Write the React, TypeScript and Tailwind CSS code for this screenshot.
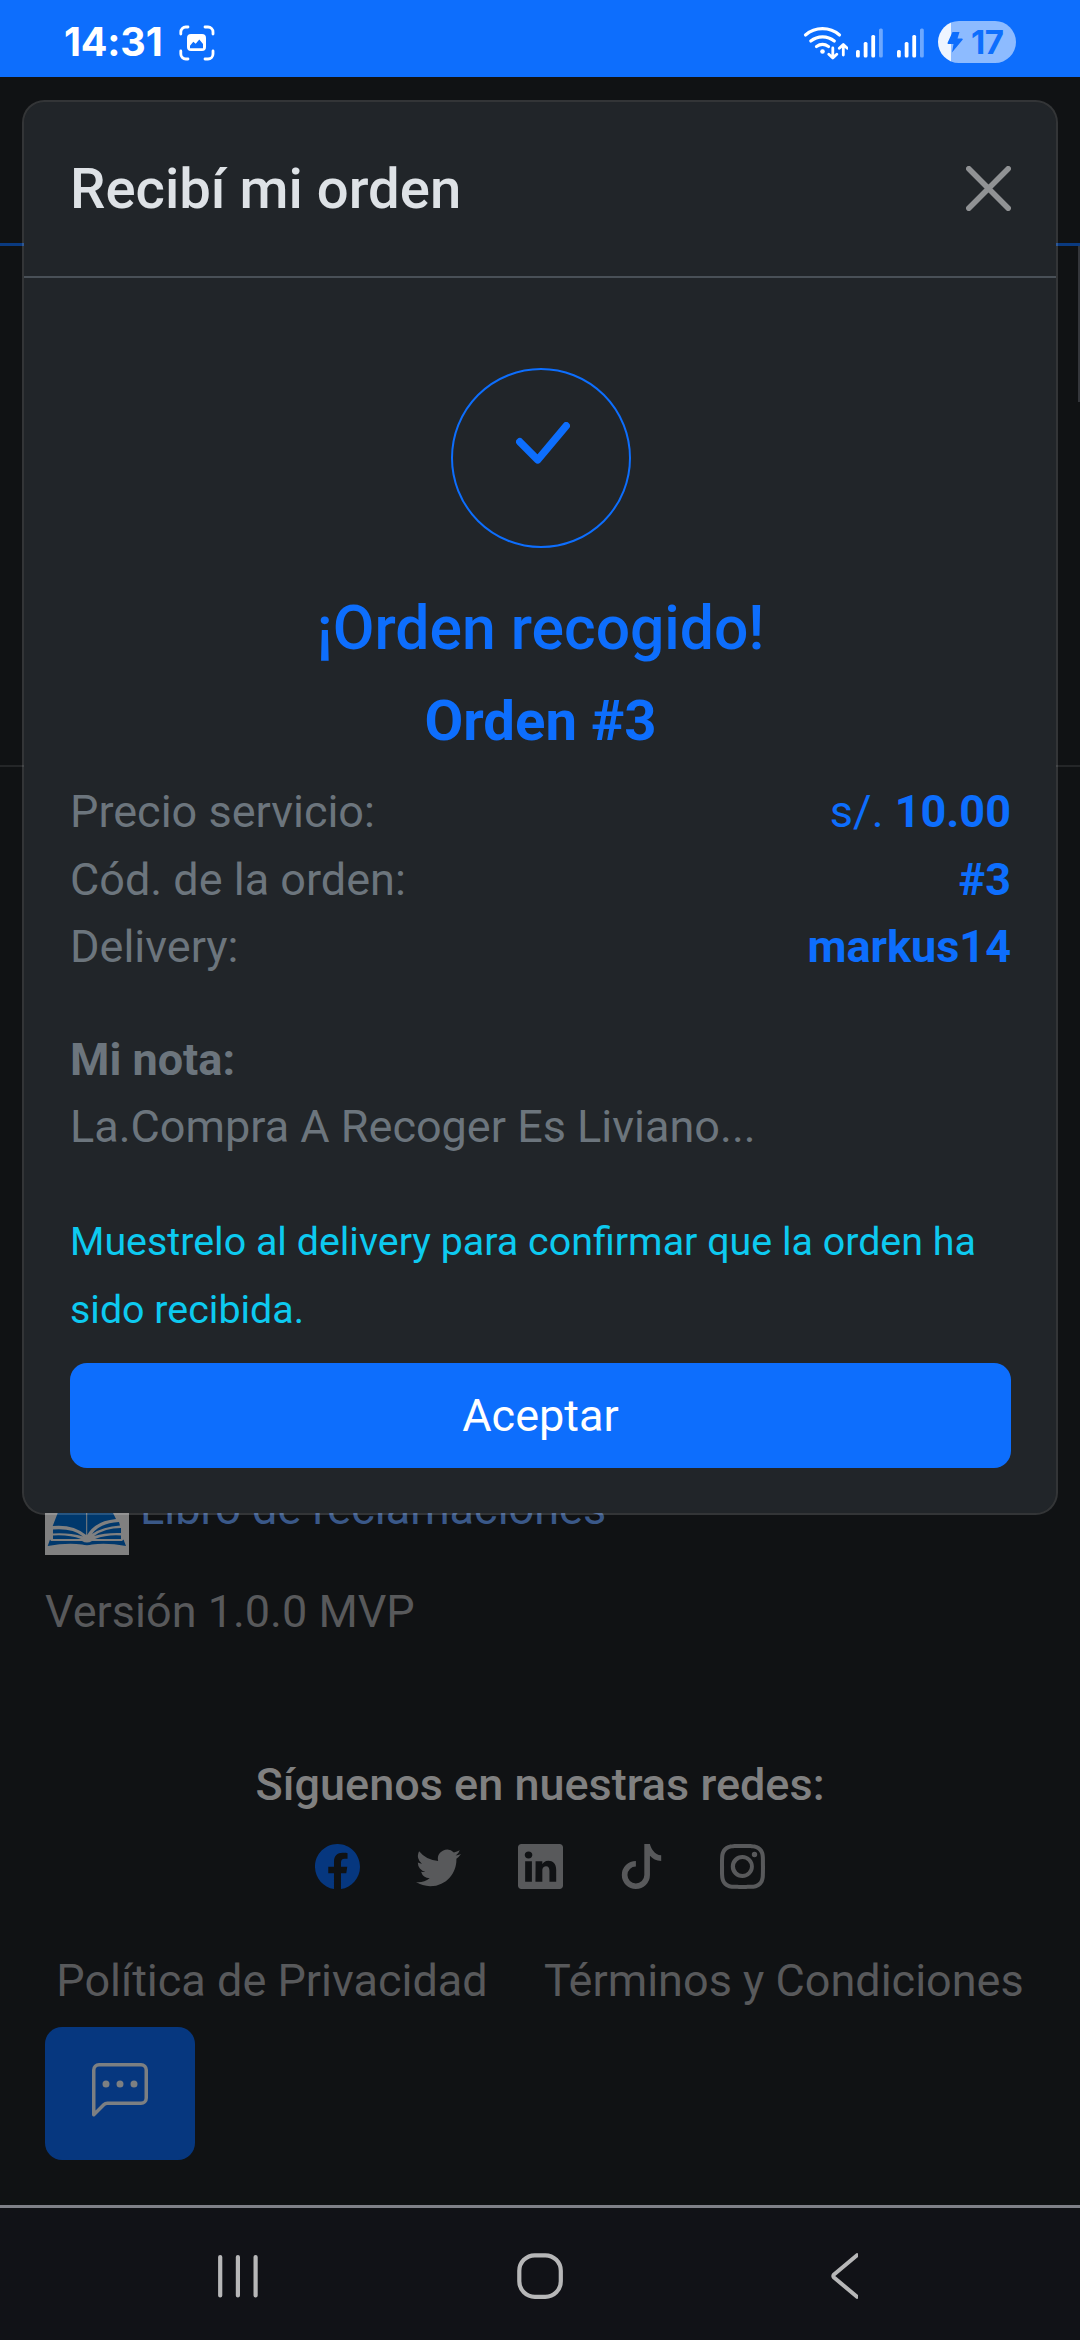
import type { ReactNode } from "react";
import {
  BsChatLeftDots,
  BsFacebook,
  BsInstagram,
  BsLinkedin,
  BsTiktok,
  BsTwitter,
} from "react-icons/bs";

function ScreenshotIcon() {
  return (
    <svg className="h-[36px] w-[36px]" viewBox="0 0 36 36" fill="none">
      <path
        d="M1.8 9V7a5 5 0 0 1 5-5H9M26 2h3a5 5 0 0 1 5 5v2M34 26v3a5 5 0 0 1-5 5H26M9 34H6.800a5 5 0 0 1-5-5v-3"
        stroke="#fff"
        strokeWidth="2.800"
        strokeLinecap="round"
      />
      <path
        fillRule="evenodd"
        d="M12 9h11a4 4 0 0 1 4 4v9a4 4 0 0 1-4 4H12a4 4 0 0 1-4-4v-9a4 4 0 0 1 4-4zM11 23.200h13V19l-3.700-4.400-3.600 4.200-2.400-2-3.300 4z"
        fill="#fff"
      />
    </svg>
  );
}

function WifiIcon() {
  return (
    <svg className="h-[36px] w-[46px]" viewBox="0 0 46 36" fill="none" stroke="#fff" strokeLinecap="round" strokeLinejoin="round">
      <path d="M3.500 10a26 26 0 0 1 34 0M8.800 16a18.500 18.500 0 0 1 23.500 0M14.500 21.500a10.500 10.500 0 0 1 12 0" strokeWidth="3.200" />
      <circle cx="20.500" cy="26.500" r="2.300" fill="#fff" stroke="none" />
      <path d="M30.800 23v9.500M26.800 29.300l4 3.800 4-3.800M41.300 30V20M37.300 23.300l4-3.900 4 3.900" strokeWidth="2.800" />
    </svg>
  );
}

function SignalIcon() {
  return (
    <svg className="h-[30px] w-[27px]" viewBox="0 0 27 30" fill="#fff">
      <rect x="0" y="22" width="3.800" height="7.500" rx="1.500" />
      <rect x="7.700" y="14" width="3.800" height="15.500" rx="1.500" />
      <rect x="15.300" y="7" width="3.800" height="22.500" rx="1.500" />
      <rect x="23" y="0.500" width="3.800" height="29" rx="1.500" opacity="0.400" />
    </svg>
  );
}

function StatusBar() {
  return (
    <header className="flex h-[77px] items-start justify-between bg-[#0d6efd] pr-[64px] pl-[64px] font-['Inter',sans-serif] text-white">
      <div className="flex pt-[18px]">
        <span className="w-[115px] text-[39.5px] leading-[48px] font-bold tracking-[-0.2px]">14:31</span>
        <div className="pt-[7px]">
          <ScreenshotIcon />
        </div>
      </div>
      <div className="flex pt-[21px]">
        <div className="mr-[8px] pt-[4px]">
          <WifiIcon />
        </div>
        <div className="flex gap-[14px] pt-[7px]">
          <SignalIcon />
          <SignalIcon />
        </div>
        <div className="ml-[14px] flex h-[42px] w-[78px] items-center overflow-hidden rounded-full bg-[linear-gradient(90deg,#eef5ff_13px,#8dbbff_13px)] pl-[9px] text-[#0d6efd]">
          <svg className="h-[22px] w-[16px]" viewBox="0 0 16 22" fill="currentColor">
            <path d="M5.500 1h7L10.500 7.500H15a.8.8 0 0 1 .6 1.300L5 21.500l1.500-8.500H1.500a.9.900 0 0 1-.9-1.200z" />
          </svg>
          <span className="ml-[8px] text-[33px] leading-[42px] font-bold tracking-[-0.5px]">17</span>
        </div>
      </div>
    </header>
  );
}

function BookLogo() {
  return (
    <svg className="block h-[84px] w-[84px] shrink-0" viewBox="0 0 84 84">
      <rect width="84" height="84" fill="#808080" />
      <path d="M12.700 42 20 30Q34 30 41.200 38V64Q28 53 7.700 55ZM42.200 38Q52 30 62 30L68 42 71 48Q50 50 42.200 64Z" fill="#00386c" />
      <path d="M8 58.500Q28 57 38 65.500Q24 61.500 8 62.500ZM74 51Q55 52 47 63Q58 55.500 75 54.500ZM76 57Q60 57 49 65Q60 61.500 76 62ZM8 64.500Q24 63.500 36 68H8ZM76 64.500Q62 63.500 50 68H76Z" fill="#00386c" />
      <path d="M5 68.500 6 70H37Q42 73 47 70H77L78.500 68.500 81 75Q62 71.500 47 73.500Q42 75 37 73.500Q22 71.500 2.700 75Z" fill="#00386c" />
    </svg>
  );
}

function PageBehind() {
  return (
    <main className="flex h-[2128px] flex-col text-[45px] leading-[67.5px] text-[#58595b]">
      <div className="h-[169px] shrink-0 border-b-[3px] border-[#0a3a80]" />
      <div className="flex h-[521px] shrink-0 items-start justify-end border-b-2 border-[#242628]">
        <div className="h-[156px] w-[2px] bg-[#34363b]" />
      </div>
      <div className="mt-[704px] flex h-[84px] shrink-0 px-[45px]">
        <BookLogo />
        <span className="ml-[11px] pt-[4px] text-[#3a5888]">Libro de reclamaciones</span>
      </div>
      <p className="mt-[23px] shrink-0 px-[45px]">Versión 1.0.0 MVP</p>
      <h2 className="mt-[105px] shrink-0 text-center font-medium text-[#808080]">Síguenos en nuestras redes:</h2>
      <div className="mt-[26px] flex shrink-0 justify-center gap-[56.25px]">
        <BsFacebook className="size-[45px] text-[#06377f]" />
        <BsTwitter className="size-[45px]" />
        <BsLinkedin className="size-[45px]" />
        <BsTiktok className="size-[45px]" />
        <BsInstagram className="size-[45px]" />
      </div>
      <nav className="mt-[58px] flex shrink-0 justify-center gap-[56.25px]">
        <a>Política de Privacidad</a>
        <a>Términos y Condiciones</a>
      </nav>
      <button className="mt-[12px] ml-[45px] flex h-[133px] w-[150px] shrink-0 justify-center rounded-[17px] bg-[#06377f] pt-[36px] text-[#7c7f82]">
        <BsChatLeftDots className="size-[56px]" />
      </button>
    </main>
  );
}

function Row({ label, children }: { label: string; children: ReactNode }) {
  return (
    <div className="flex justify-between">
      <span>{label}</span>
      <span className="text-[#0d6efd]">{children}</span>
    </div>
  );
}

function OrderModal() {
  return (
    <section className="absolute top-[100px] right-[22px] left-[22px] h-[1415px] rounded-[22.5px] border-2 border-white/15 bg-[#212529] bg-clip-padding text-[45px] leading-[67.5px] text-[#6c757d]">
      <div className="flex h-[176px] items-center justify-between border-b-2 border-[#495057] pr-[45px] pl-[46px]">
        <h1 className="pt-[2px] text-[56.25px] font-medium text-[#dee2e6]">Recibí mi orden</h1>
        <svg className="mb-px size-[45px]" viewBox="0 0 45 45" fill="none" stroke="#909294" strokeWidth="5.600" strokeLinecap="round">
          <path d="M2.800 2.800 42.200 42.200M42.200 2.800 2.800 42.200" />
        </svg>
      </div>
      <div className="pt-[90px] pr-[45px] pl-[46px]">
        <div className="mx-auto flex size-[180px] justify-center rounded-full border-2 border-[#0d6efd]">
          <svg className="mt-[52px] ml-[4px] h-[42px] w-[54px]" viewBox="0 0 54 42" fill="none" stroke="#0d6efd" strokeWidth="7.500" strokeLinecap="round" strokeLinejoin="round">
            <path d="M3.800 19.800 21.700 37.800 50.200 3.800" />
          </svg>
        </div>
        <h2 className="mt-[44px] text-center text-[60.6px] leading-[73px] font-medium text-[#0d6efd]">¡Orden recogido!</h2>
        <h3 className="mt-[22.5px] mb-[23px] text-center text-[56.25px] leading-[67.5px] font-bold text-[#0d6efd]">Orden #3</h3>
        <Row label="Precio servicio:">
          s/. <b>10.00</b>
        </Row>
        <Row label="Cód. de la orden:">
          <b>#3</b>
        </Row>
        <Row label="Delivery:">
          <b>markus14</b>
        </Row>
        <p className="mt-[45px] font-bold">Mi nota:</p>
        <p>La.Compra A Recoger Es Liviano...</p>
        <p className="mt-[47.5px] text-[39.4px] text-[#0dcaf0]">Muestrelo al delivery para confirmar que la orden ha sido recibida.</p>
        <button className="mt-[20px] h-[105px] w-full rounded-[17px] bg-[#0d6efd] text-white">Aceptar</button>
      </div>
    </section>
  );
}

function SystemNav() {
  return (
    <footer className="flex h-[135px] border-t-[3px] border-[#7f8088] bg-[#111217] pt-[45px]">
      <svg className="ml-[217px] h-[46px] w-[43px]" viewBox="0 0 43 46" fill="none" stroke="#b7b7b8" strokeWidth="4.200" strokeLinecap="round">
        <path d="M3.200 4v38.500M20.900 4v38.500M38.600 4v38.500" />
      </svg>
      <svg className="ml-[257px] size-[46px]" viewBox="0 0 46 46" fill="none" stroke="#b7b7b8" strokeWidth="4.200">
        <rect x="2.300" y="2.300" width="41.500" height="41.500" rx="15.500" />
      </svg>
      <svg className="ml-[265px] h-[46px] w-[30px]" viewBox="0 0 30 46" fill="none" stroke="#b7b7b8" strokeWidth="4" strokeLinecap="round" strokeLinejoin="round">
        <path d="M29 2.200 6 21.500Q4.500 23 6 24.500L29 43.800" />
      </svg>
    </footer>
  );
}

export default function App() {
  return (
    <div className="relative h-[2340px] w-[1080px] overflow-hidden bg-[#101214] font-['Roboto',sans-serif]">
      <StatusBar />
      <PageBehind />
      <SystemNav />
      <OrderModal />
    </div>
  );
}
